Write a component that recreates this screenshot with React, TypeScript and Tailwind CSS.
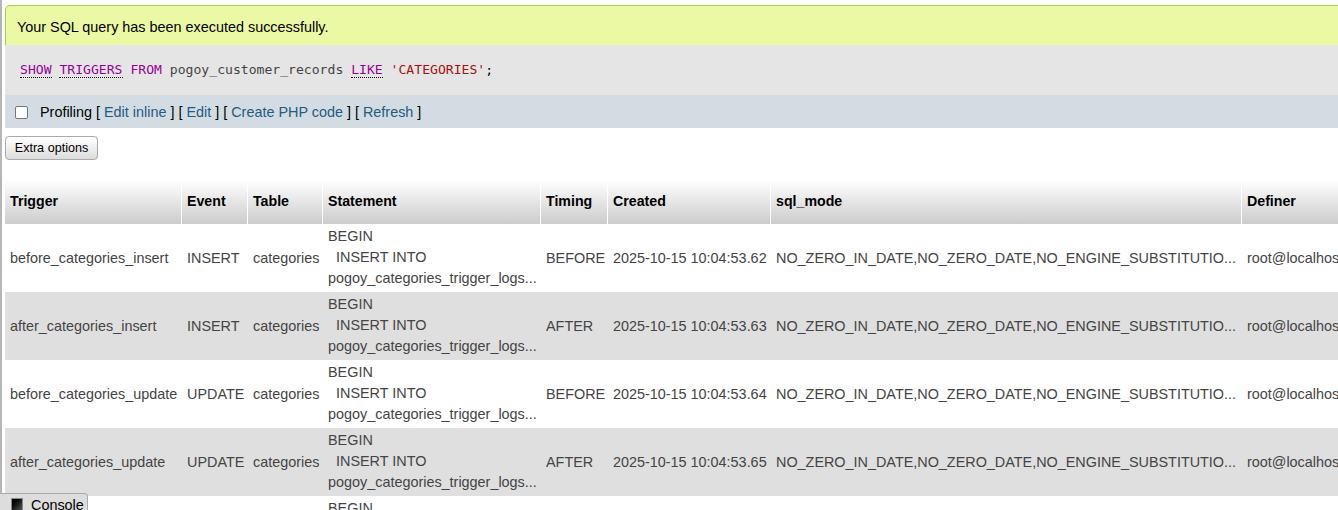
import type { ReactNode } from 'react';

const ROWS = [
  { name: 'before_categories_insert', event: 'INSERT', timing: 'BEFORE', created: '2025-10-15 10:04:53.62' },
  { name: 'after_categories_insert', event: 'INSERT', timing: 'AFTER', created: '2025-10-15 10:04:53.63' },
  { name: 'before_categories_update', event: 'UPDATE', timing: 'BEFORE', created: '2025-10-15 10:04:53.64' },
  { name: 'after_categories_update', event: 'UPDATE', timing: 'AFTER', created: '2025-10-15 10:04:53.65' },
  { name: 'before_categories_delete', event: 'DELETE', timing: 'BEFORE', created: '2025-10-15 10:04:53.66' },
  { name: 'after_categories_delete', event: 'DELETE', timing: 'AFTER', created: '2025-10-15 10:04:53.67' },
];

const SQL_MODE = 'NO_ZERO_IN_DATE,NO_ZERO_DATE,NO_ENGINE_SUBSTITUTIO...';

function Kw({ children, dotted = true }: { children: ReactNode; dotted?: boolean }) {
  return (
    <span className={dotted ? 'text-[#990099] border-b border-dotted border-black' : 'text-[#990099]'}>
      {children}
    </span>
  );
}

function Link({ children }: { children: ReactNode }) {
  return <span className="text-[#235a81]">{children}</span>;
}

const th = 'text-left align-middle font-bold text-black text-[14.2px] pl-[5px] pr-[3px] border-r border-white bg-linear-to-b from-white to-[#cccccc]';
const td = 'align-middle pl-[5px] pr-[3px] pt-[2px] whitespace-nowrap';

export default function App() {
  return (
    <div className="w-[1338px] h-[510px] overflow-hidden bg-white font-['Liberation_Sans',Arial,sans-serif] text-[14.4px] text-[#444]">
      <div className="h-full border-l-2 border-[#b5b5b5] pl-[3px] pt-[5px]">
        <div className="w-[1400px]">
          <div className="h-[40px] flex items-center pl-[11px] pt-[5px] bg-[#ebf8a4] border border-b-0 border-[#a2d246] rounded-tl-[5px] text-black">
            Your SQL query has been executed successfully.
          </div>
          <div className="h-[50px] flex items-center pl-[15px] bg-[#e5e5e5]">
            <span className="font-['DejaVu_Sans_Mono',monospace] text-[13.1px] text-[#444] whitespace-pre">
              <Kw>SHOW</Kw> <Kw>TRIGGERS</Kw> <Kw dotted={false}>FROM</Kw> pogoy_customer_records <Kw>LIKE</Kw>{' '}
              <span className="text-[#aa1111]">'CATEGORIES'</span>
              <span className="text-black">;</span>
            </span>
          </div>
          <div className="h-[33px] flex items-center pl-[10px] pt-[2px] bg-[#d3dce3] text-black">
            <span className="w-[13px] h-[13px] border border-[#767676] rounded-[2px] bg-white" />
            <span className="ml-[12px] whitespace-pre">
              Profiling [ <Link>Edit inline</Link> ] [ <Link>Edit</Link> ] [ <Link>Create PHP code</Link> ] [ <Link>Refresh</Link> ]
            </span>
          </div>
        </div>

        <button className="mt-[8px] h-[24px] w-[93px] rounded-[4px] border border-[#aaaaaa] bg-linear-to-b from-white to-[#dddddd] text-[12.6px] text-black">
          Extra options
        </button>

        <table className="mt-[20px] table-fixed border-separate border-spacing-0 w-[1700px]">
          <thead>
            <tr className="h-[44px]">
              <th className={`${th} w-[177px]`}>Trigger</th>
              <th className={`${th} w-[66px]`}>Event</th>
              <th className={`${th} w-[75px]`}>Table</th>
              <th className={`${th} w-[218px]`}>Statement</th>
              <th className={`${th} w-[67px]`}>Timing</th>
              <th className={`${th} w-[163px]`}>Created</th>
              <th className={`${th} w-[471px]`}>sql_mode</th>
              <th className={`${th} w-[150px]`}>Definer</th>
              <th className={`${th} w-[160px]`}>character_set_client</th>
              <th className={`${th}`}>collation_connection</th>
            </tr>
          </thead>
          <tbody>
            {ROWS.map((r, i) => (
              <tr key={r.name} className={i % 2 === 0 ? 'h-[68px] bg-white' : 'h-[68px] bg-[#dfdfdf]'}>
                <td className={td}>{r.name}</td>
                <td className={td}>{r.event}</td>
                <td className={td}>categories</td>
                <td className="align-middle pl-[5px] pr-[3px] pt-[1px] pb-[3px] leading-[21px] whitespace-pre">
                  {'BEGIN\n  INSERT INTO\npogoy_categories_trigger_logs...'}
                </td>
                <td className={td}>{r.timing}</td>
                <td className={td}>{r.created}</td>
                <td className={td}>{SQL_MODE}</td>
                <td className={td}>root@localhost</td>
                <td className={td}>utf8mb4</td>
                <td className={td}>utf8mb4_unicode_ci</td>
              </tr>
            ))}
          </tbody>
        </table>
      </div>

      <div className="fixed left-0 top-[493px] h-[26px] w-[88px] flex items-start gap-[8px] pl-[11px] pt-[3px] bg-[#dddddd] border border-l-0 border-[#aaaaaa] rounded-tr-[4px] text-black text-[14.4px]">
        <span className="mt-[1px] w-[12px] h-[13px] border border-[#888] bg-linear-to-br from-black to-[#555]" />
        <span className="leading-[16px]">Console</span>
      </div>
    </div>
  );
}
